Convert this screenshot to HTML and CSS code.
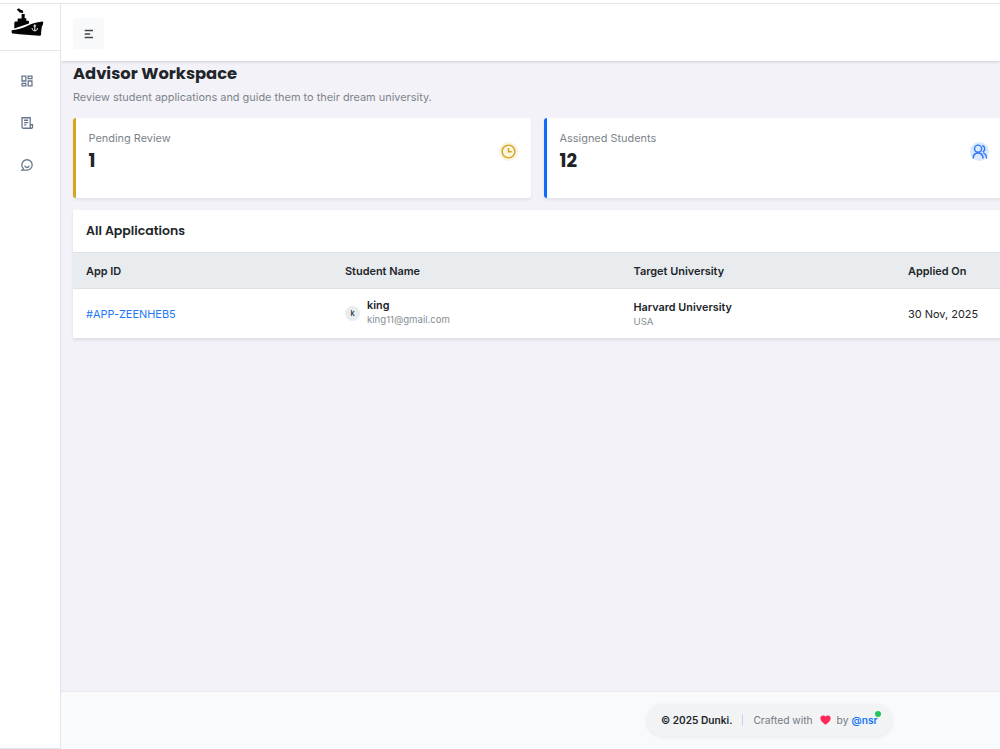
FILE: index.html
```html
<!DOCTYPE html>
<html lang="en">
<head>
<meta charset="utf-8">
<title>Advisor Workspace</title>
<link rel="stylesheet" href="styles.css">
</head>
<body>
<div class="app">
  <aside class="sidebar">
    <div class="brand">
      <svg class="logo" width="34" height="29" viewBox="0 0 34 29">
        <path d="M6.2 1.2C7.2.2 8.8.5 9.4 1.7c1.7-.4 3 1 2.8 2.7-.5 1-1.4 1-2.1.2C9 4.8 7.6 4.3 7.8 3.2 6.8 3 6 2.200 6.200 1.200z"/>
        <path d="M10.600 6h3.100v4.200h1.600v2.600h1.500c.8 0 1.200.5 1.200 1.200v1.400L3.300 20.500v-5.200c0-1 .6-1.700 1.500-1.700h1.800v-1.700c0-.8.500-1.300 1.300-1.300h2.700z"/>
        <path d="M.6 22.300c5-.4 9.600-1.500 14-3.500 5.400-2.600 10.500-4.700 16.900-5.200.5 0 .8.300.7.800l-.4 2.600c-.1.500-.3.800-.8 1-.7 4-.8 5.200-.9 8.200 0 1-.6 1.600-1.600 1.500-9.200-.3-18.200-1-26.500-2.100-.8-.1-1.400-.6-1.300-1.300z"/>
        <path class="anchor" d="M23.800 16.300v6.400M22.500 18h2.600M21 20.200c.2 1.700 1.200 2.600 2.800 2.600s2.500-.9 2.700-2.600"/>
      </svg>
    </div>
    <nav class="nav">
      <svg class="nav-icon" viewBox="0 0 24 24"><path d="M3.500 3.500h6.500v8.500H3.500zM3.500 16h6.500v4.500H3.500zM14 3.500h6.500V8H14zM14 12h6.500v8.500H14z"/></svg>
      <svg class="nav-icon" viewBox="0 0 24 24"><path d="M17.500 14V3h-14v16c0 1.200.8 2 2 2h13.700M7 7.300h7M7 11.200h7M7 15.100h4M17.500 15h4v3.700c0 1.300-.9 2.300-2.100 2.300s-1.900-1-1.900-2.300z"/></svg>
      <svg class="nav-icon" viewBox="0 0 24 24"><path d="M3.300 20.800h8.700a8.900 8.900 0 1 0-8.900-8.900c0 2.500 1 4.700 2.600 6.300zM8 13c.5 2 2 3.300 4 3.300s3.500-1.300 4-3.300"/></svg>
    </nav>
  </aside>
  <div class="main">
    <header class="topbar">
      <button class="menu" aria-label="Toggle menu">
        <svg width="10" height="10" viewBox="0 0 10 10"><path d="M.7 1.500h8.300M.7 5h5.500M.7 8.500h8.300"/></svg>
      </button>
    </header>
    <main class="content">
      <h1 class="title">Advisor Workspace</h1>
      <p class="subtitle">Review student applications and guide them to their dream university.</p>
      <section class="stats">
        <article class="stat pending">
          <div><div class="stat-label">Pending Review</div><div class="stat-value">1</div></div>
          <span class="badge"><svg viewBox="0 0 24 24"><circle cx="12" cy="12" r="9"/><path d="M12 7v5.500h4.500"/></svg></span>
        </article>
        <article class="stat assigned">
          <div><div class="stat-label">Assigned Students</div><div class="stat-value">12</div></div>
          <span class="badge"><svg viewBox="0 0 24 24"><circle cx="10" cy="8" r="5"/><path d="M3 22c0-5 3-8 7-8s7 3 7 8M16 3.500c4.500 2 4.500 7.500.5 9.500M17.500 14c3 1.500 4.500 4 4.500 8"/></svg></span>
        </article>
      </section>
      <section class="panel">
        <h2 class="panel-title">All Applications</h2>
        <div class="row head"><span>App ID</span><span>Student Name</span><span>Target University</span><span>Applied On</span></div>
        <div class="row item">
          <a class="app-id">#APP-ZEENHEB5</a>
          <div class="student"><span class="avatar">k</span><div><div class="name">king</div><div class="detail">king11@gmail.com</div></div></div>
          <div class="university"><div class="name">Harvard University</div><div class="detail">USA</div></div>
          <span class="date">30 Nov, 2025</span>
        </div>
      </section>
    </main>
    <footer class="footer">
      <div class="pill">
        <strong class="copyright">© 2025 Dunki.</strong><i class="divider"></i><span>Crafted with</span>
        <svg class="heart" width="11" height="10" viewBox="0 0 11 10"><path d="M5.500 9.700C2.800 7.800.3 5.700.3 3.300.3 1.600 1.500.4 3 .4c1.100 0 2 .5 2.500 1.300C6 .9 6.900.4 8 .4c1.500 0 2.700 1.200 2.700 2.900 0 2.400-2.500 4.500-5.200 6.400z"/></svg>
        <span>by</span><span class="author">@nsr<i class="online"></i></span>
      </div>
    </footer>
  </div>
</div>
</body>
</html>
```
FILE: styles.css
```css
* { box-sizing: border-box; }
body { margin: 0; background: #fff; font: 10.95px/17px Inter, sans-serif; color: #212529; }
.app { display: flex; width: 1000px; height: 749px; padding-top: 3px; overflow: hidden; }
.sidebar { width: 61px; height: 746px; flex: none; border: 1px solid #e2e5ec; border-left: 0; background: #fff; }
.brand { height: 47px; border-bottom: 1px solid #e2e5ec; padding: 4px 0 0 11px; }
.logo { display: block; fill: #050505; }
.anchor { fill: none; stroke: #fff; stroke-width: 1; }
.nav { display: flex; flex-direction: column; gap: 28px; padding: 23px 0 0 20px; }
.nav-icon { width: 14px; height: 14px; fill: none; stroke: #64748b; stroke-width: 2.2; }
.main { width: 939px; display: flex; flex-direction: column; background: #f3f2f8; }
.topbar { flex: none; height: 58px; padding: 14px 12px 12px; border-top: 1px solid #e2e5ec; background: #fff; box-shadow: 0 1px 3px #00000025; clip-path: inset(0 0 -5px 0); }
.menu { display: flex; align-items: center; justify-content: center; width: 31px; height: 31px; padding: 0; border: 0; border-radius: 3px; background: #f8f9fb; }
.menu svg { fill: none; stroke: #42474d; stroke-width: 1.3; }
.content { flex: 1; padding: 2px 0 0 12px; overflow: hidden; }
.title { margin: 0; font: 700 16.35px/21px Poppins, Inter, sans-serif; }
.subtitle { margin: 5px 0 12px; color: #7c848b; font-size: 10.93px; }
.stats { display: grid; grid-template-columns: 458px 458px; gap: 13px; }
.stat { display: flex; justify-content: space-between; height: 80px; padding: 12px 13px 11px 12.500px; border-left: 3px solid; border-radius: 3px; background: #fff; box-shadow: 0 2px 3px #00000012; }
.pending { border-color: #d4a520; }
.assigned { border-color: #0d6efd; }
.stat-label { color: #7c848b; font-size: 10.93px; }
.stat-value { margin-top: 1px; color: #212529; font: 700 18.500px/25px Poppins, Inter, sans-serif; }
.badge { display: flex; align-items: center; justify-content: center; width: 19px; height: 19px; margin-top: 12px; border-radius: 50%; }
.badge svg { flex: none; width: 17px; height: 17px; fill: none; stroke-width: 2.1; }
.pending .badge { background: #faf3df; }
.pending .badge svg { stroke: #d4a520; }
.assigned .badge { background: #dbe9ff; }
.assigned .badge svg { stroke: #3478f6; }
.panel { width: 1080px; margin-top: 12px; background: #fff; box-shadow: 0 2px 3px #00000018; }
.panel-title { height: 42px; margin: 0; padding: 0 13px; font: 600 12.5px/42px Poppins, Inter, sans-serif; }
.row { display: grid; grid-template-columns: 259px 288.500px 274.500px 1fr; align-items: center; padding-left: 13px; }
.head { height: 37px; padding-top: 1px; border: solid #dfe3e7; border-width: 1px 0; background: #e8ecef; font-weight: 600; font-size: 10.93px; }
.item { height: 49px; }
.app-id { padding-top: 2px; color: #1b78f7; }
.date { padding-top: 2px; }
.university { padding-top: 1px; }
.student { display: flex; align-items: center; gap: 7px; margin-top: -3px; }
.avatar { width: 15px; height: 15px; margin-top: 3px; border-radius: 50%; background: #e8ecef; font-size: 7.500px; line-height: 15px; text-align: center; font-weight: 500; }
.name { font-weight: 600; font-size: 10.85px; line-height: 15px; }
.detail { color: #868d94; font-size: 9.600px; line-height: 14px; }
.footer { flex: none; display: flex; height: 58px; padding: 12px 0 0 586px; border-top: 1px solid #e7e9ee; background: #f9fafc; }
.pill { display: flex; align-items: center; width: 245px; height: 32px; padding-left: 14px; border-radius: 16px; background: #f1f3f5; color: #737b83; font-size: 10.250px; box-shadow: 0 1px 4px #00000014; white-space: nowrap; }
.copyright { color: #212529; font-weight: 600; font-size: 10.15px; }
.divider { width: 1px; height: 12px; margin: 0 10px; background: #d9c9ee; }
.heart { margin: 0 6px 0 7px; fill: #ff2858; }
.author { position: relative; margin-left: 3px; color: #1b78f7; font-weight: 600; }
.online { position: absolute; top: -1px; right: -3px; width: 6px; height: 6px; border-radius: 50%; background: #22c55e; }
```
